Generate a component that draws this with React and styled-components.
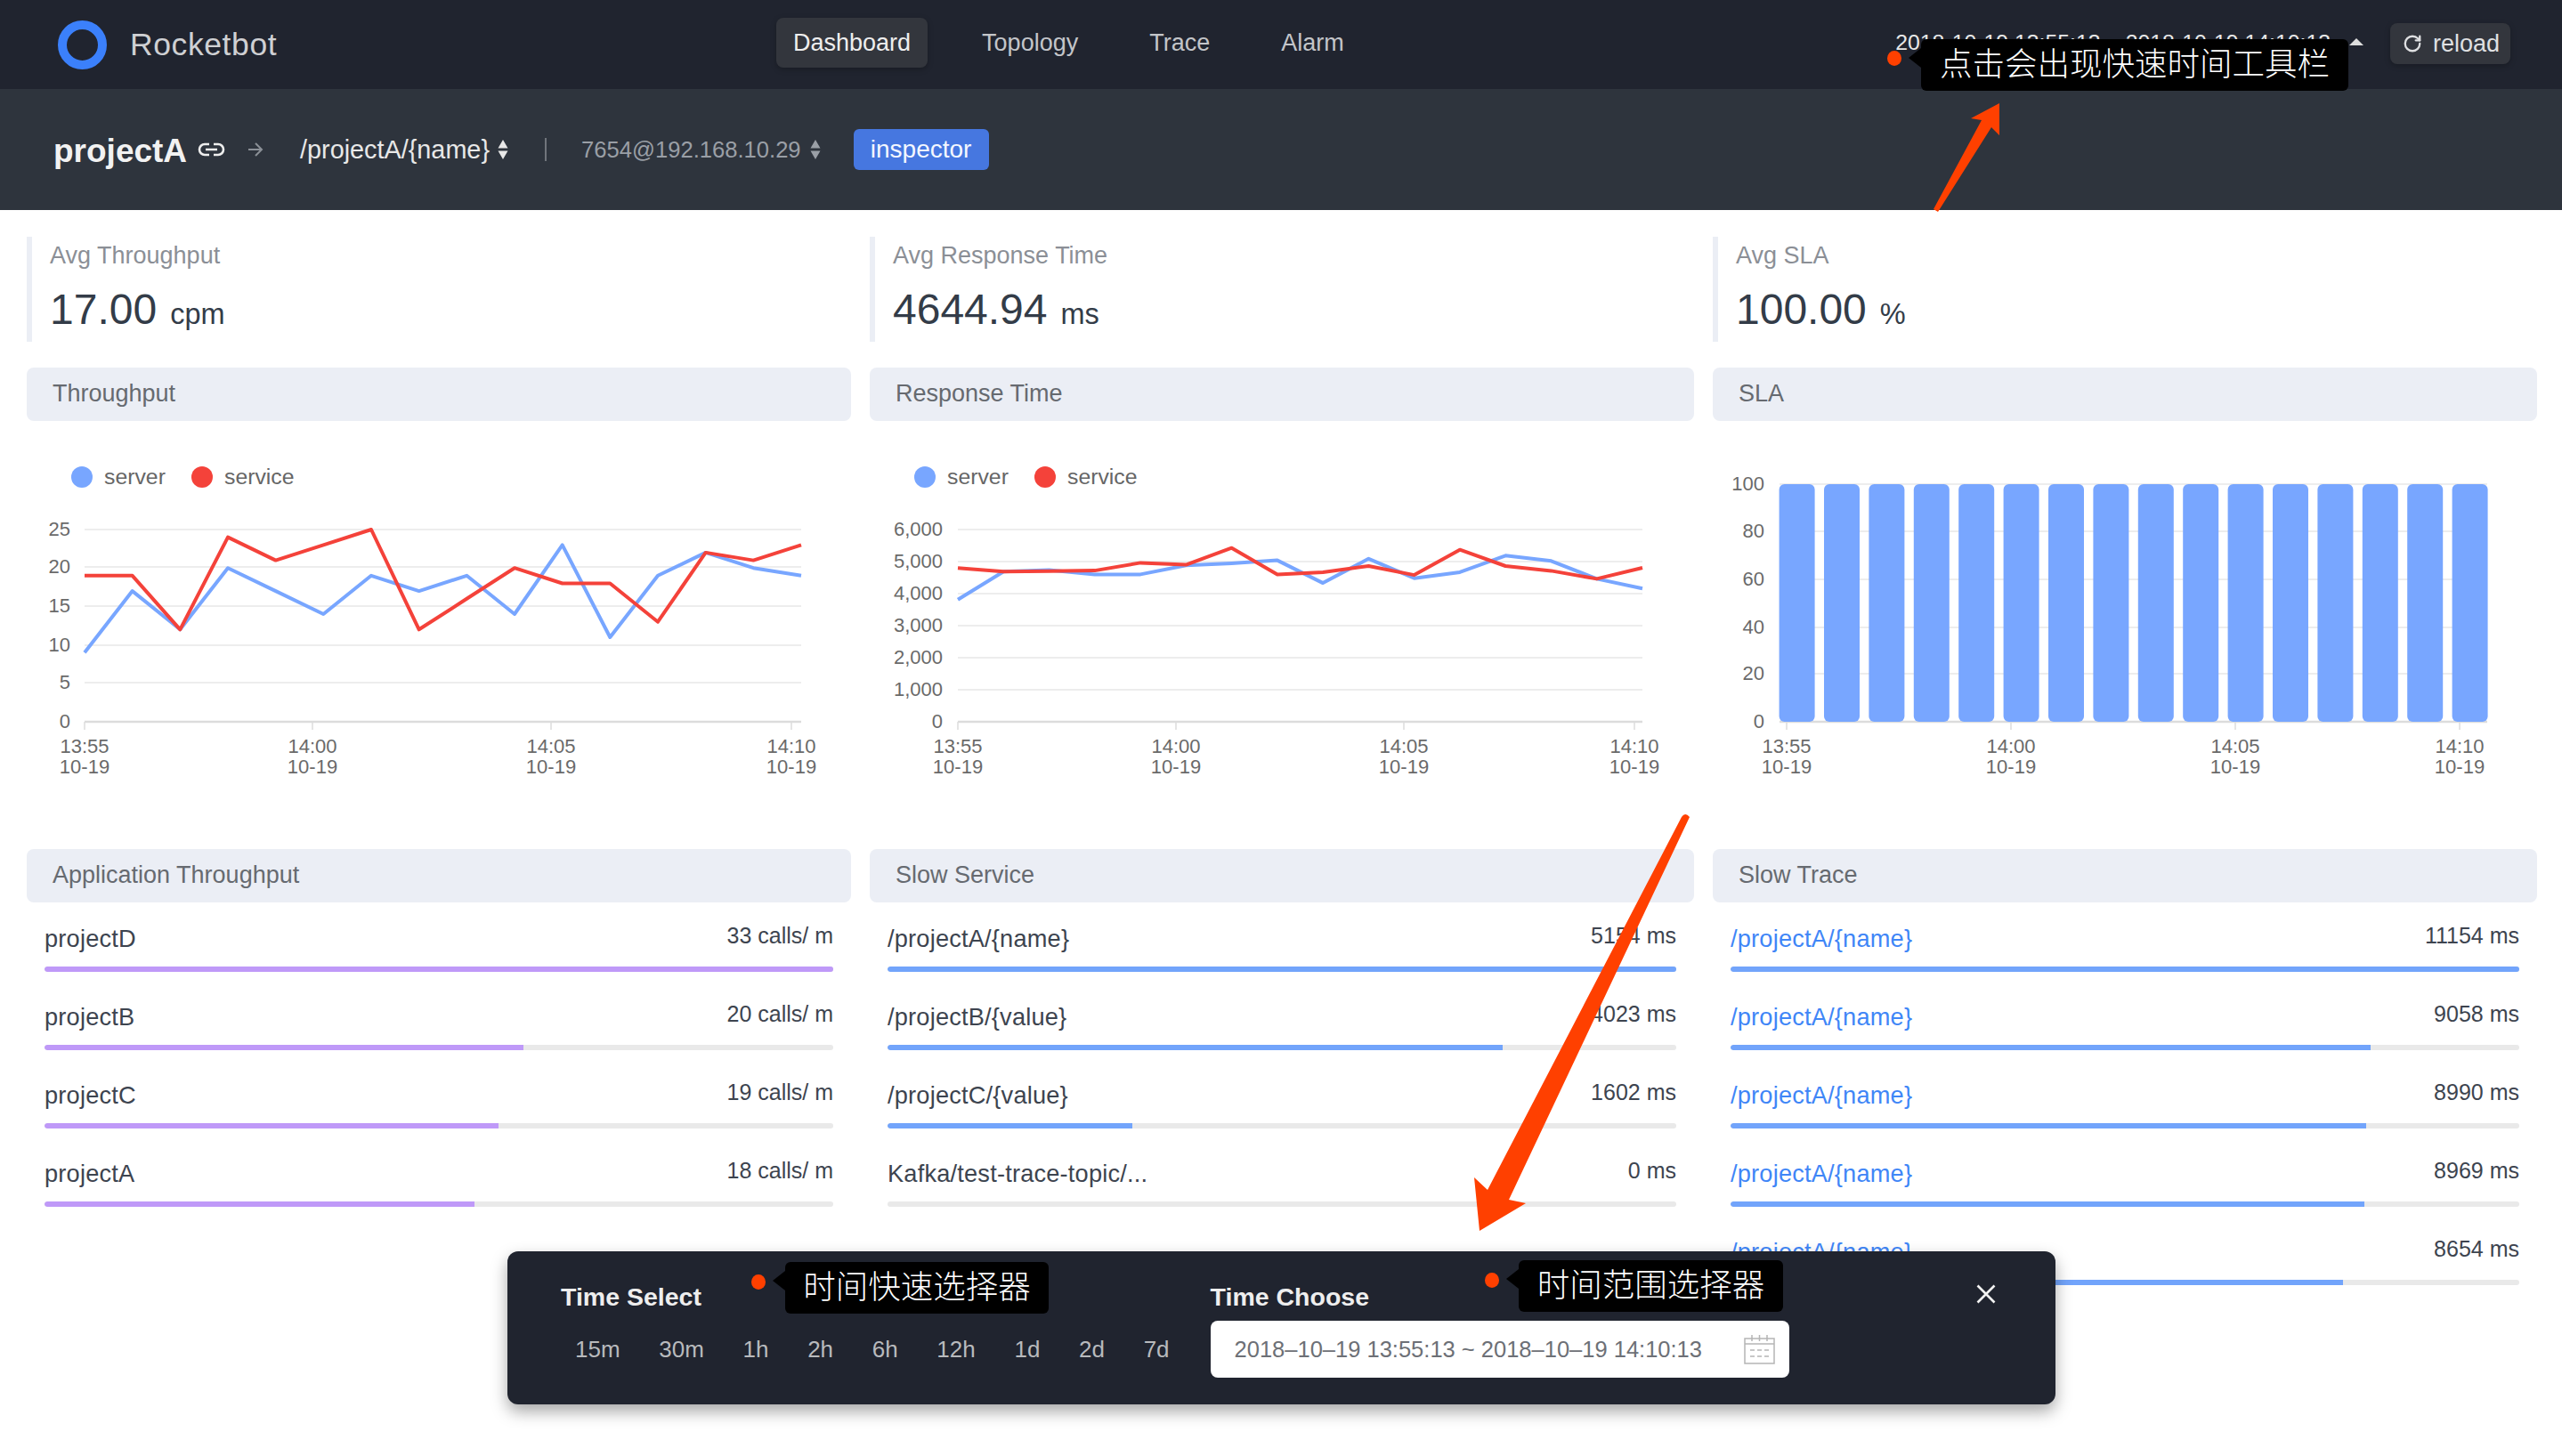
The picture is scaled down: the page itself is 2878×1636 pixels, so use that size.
import React from "react";
import styled, { createGlobalStyle } from "styled-components";
import { RotateCw } from "lucide-react";

const blue = "#78a6ff";
const red = "#f4423a";
const orange = "#ff4000";

const GlobalStyle = createGlobalStyle`
  html, body {
    margin: 0;
    padding: 0;
    background: #fff;
  }
  body {
    font-family: "Liberation Sans", "Noto Sans CJK SC", sans-serif;
  }
  * {
    box-sizing: border-box;
  }
`;

const Root = styled.div`
  position: relative;
  width: 2878px;
  height: 1636px;
  overflow: hidden;
  background: #fff;
`;

const TopBar = styled.header`
  display: flex;
  align-items: center;
  height: 100px;
  padding: 0 58px 0 65px;
  background: #20242f;
`;

const Logo = styled.div`
  display: flex;
  align-items: center;
  width: 807px;
`;

const LogoRing = styled.span`
  width: 55px;
  height: 55px;
  border: 10px solid #3b80fb;
  border-radius: 50%;
`;

const LogoText = styled.span`
  margin-left: 26px;
  font-size: 35.5px;
  letter-spacing: 0.6px;
  color: #cfd0d3;
`;

const Nav = styled.nav`
  display: flex;
  gap: 42px;
  margin-top: -4px;
`;

const NavItem = styled.div`
  height: 56px;
  padding: 0 19px;
  border-radius: 8px;
  font-size: 27px;
  line-height: 56px;
  color: ${(props) => (props.$active ? "#eeeeee" : "#c3c5c9")};
  background: ${(props) => (props.$active ? "#33363d" : "transparent")};
  box-shadow: ${(props) => (props.$active ? "0 2px 6px rgba(0,0,0,.25)" : "none")};
`;

const TimeRange = styled.div`
  display: flex;
  align-items: center;
  margin-left: auto;
  margin-top: -4px;
  font-size: 24.8px;
  color: #e8e8e8;
`;

const Caret = styled.span`
  margin-left: 21px;
  margin-top: -3px;
  border-left: 8.5px solid transparent;
  border-right: 8.5px solid transparent;
  border-bottom: 8px solid #dddddd;
`;

const ReloadButton = styled.div`
  display: flex;
  align-items: center;
  gap: 12px;
  width: 135px;
  height: 46px;
  margin-left: 30px;
  margin-top: -2px;
  padding-left: 14px;
  border-radius: 8px;
  font-size: 27px;
  color: #dfe0e2;
  background: #33363d;
  box-shadow: 0 2px 6px rgba(0, 0, 0, 0.25);
`;

const SubBar = styled.div`
  display: flex;
  align-items: center;
  height: 136px;
  padding-left: 60px;
  background: #2e343d;
`;

const ProjectName = styled.span`
  margin-top: 3px;
  font-size: 37px;
  font-weight: 700;
  color: #f2f2f2;
`;

const SubIcon = styled.svg`
  flex: none;
  margin-left: ${(props) => props.$left}px;
`;

const Crumb = styled.span`
  margin-left: ${(props) => props.$left}px;
  font-size: ${(props) => props.$size}px;
  color: ${(props) => props.$color};
`;

const Divider = styled.span`
  width: 2px;
  height: 26px;
  margin-left: 41px;
  background: #70757c;
`;

const InspectorButton = styled.div`
  width: 152px;
  height: 46px;
  margin-left: 37px;
  border-radius: 6px;
  font-size: 28px;
  line-height: 46px;
  text-align: center;
  color: #f4f7ff;
  background: #4677e0;
`;

const Main = styled.main`
  display: grid;
  grid-template-columns: repeat(3, 1fr);
  column-gap: 21px;
  padding: 30px 28px 0 30px;
`;

const Column = styled.section`
  display: flex;
  flex-direction: column;
  min-width: 0;
`;

const Stat = styled.div`
  height: 118px;
  margin-bottom: 29px;
  padding: 0 0 0 20px;
  border-left: 6px solid #ebeef5;
`;

const StatLabel = styled.div`
  padding-top: 5px;
  font-size: 27px;
  line-height: 32px;
  color: #8b8f96;
`;

const StatValue = styled.div`
  margin-top: 17px;
  font-size: 48px;
  line-height: 56px;
  color: #333c48;
`;

const StatUnit = styled.span`
  margin-left: 15px;
  font-size: 32.5px;
`;

const PanelTitle = styled.div`
  height: 60px;
  padding-left: 29px;
  border-radius: 8px;
  font-size: 27px;
  line-height: 58px;
  color: #666a70;
  background: #ebeef5;
`;

const ChartSvg = styled.svg`
  display: block;
  flex: none;
`;

const ChartText = styled.text`
  font-family: "Liberation Sans", sans-serif;
  font-size: 22px;
  fill: #6a6a6a;
`;

const LegendText = styled.text`
  font-family: "Liberation Sans", sans-serif;
  font-size: 24.8px;
  fill: #666666;
`;

const Row = styled.div`
  margin-bottom: 10px;
  padding: 0 20px;
`;

const RowHead = styled.div`
  display: flex;
  justify-content: space-between;
  height: 72px;
`;

const RowName = styled.span`
  margin-top: 23px;
  font-size: 27.2px;
  letter-spacing: 0.2px;
  line-height: 36px;
  color: ${(props) => (props.$link ? "#3f86f7" : "#3d444f")};
`;

const RowValue = styled.span`
  margin-top: 19px;
  font-size: 25px;
  line-height: 36px;
  color: #3d444f;
`;

const Track = styled.div`
  height: 6px;
  border-radius: 3px;
  overflow: hidden;
  background: #e9e9e9;
`;

const Fill = styled.div`
  height: 100%;
  border-radius: 3px 0 0 3px;
  background: ${(props) => props.$color};
`;

const TimePanel = styled.div`
  position: absolute;
  left: 570px;
  top: 1406px;
  display: flex;
  width: 1739px;
  height: 172px;
  padding: 30px 0 0 60px;
  border-radius: 12px;
  background: #20242f;
  box-shadow: 0 8px 18px rgba(0, 0, 0, 0.35);
`;

const TimeGroup = styled.div`
  display: flex;
  flex-direction: column;
  margin-left: ${(props) => props.$left || 0}px;
`;

const TimeTitle = styled.div`
  height: 42px;
  margin-bottom: 6px;
  font-size: 28.5px;
  font-weight: 700;
  line-height: 42px;
  color: #eeeeee;
`;

const QuickList = styled.div`
  display: flex;
  align-items: center;
  gap: 43.7px;
  height: 64px;
  padding-left: 16px;
`;

const QuickItem = styled.span`
  font-size: 26px;
  color: #b8babd;
`;

const DateInput = styled.div`
  display: flex;
  align-items: center;
  justify-content: space-between;
  width: 650px;
  height: 64px;
  padding: 0 16px 0 27px;
  border-radius: 8px;
  font-size: 25.5px;
  color: #6d7076;
  background: #fff;
`;

const CloseIcon = styled.svg`
  position: absolute;
  left: 1650px;
  top: 37px;
`;

const NoteDot = styled.span`
  position: absolute;
  left: ${(props) => props.$x}px;
  top: ${(props) => props.$y}px;
  width: 16px;
  height: 17px;
  border-radius: 50%;
  background: ${orange};
`;

const NoteBubble = styled.div`
  position: absolute;
  left: ${(props) => props.$x}px;
  top: ${(props) => props.$y}px;
  width: ${(props) => props.$width}px;
  height: 58px;
  border-radius: 6px;
  font-family: "Noto Sans CJK SC", "Liberation Sans", sans-serif;
  font-size: 36.5px;
  font-weight: 300;
  line-height: 52px;
  text-align: center;
  white-space: nowrap;
  color: #fff;
  background: #000;

  &::before {
    content: "";
    position: absolute;
    left: -14px;
    top: 10px;
    border-top: 11px solid transparent;
    border-bottom: 11px solid transparent;
    border-right: 14px solid #000;
  }
`;

const ArrowLayer = styled.svg`
  position: absolute;
  left: 0;
  top: 0;
  pointer-events: none;
`;

const timeLabels = ["13:55", "14:00", "14:05", "14:10"];

const throughput = {
  ticks: [65, 321, 589, 859],
  plot: [65, 870],
  labelX: 49,
  max: 25,
  yLabels: [0, 5, 10, 15, 20, 25],
  yPos: [338, 294, 252, 208, 164, 122],
  server: [9, 17, 12, 20, 17, 14, 19, 17, 19, 14, 23, 11, 19, 22, 20, 19],
  service: [19, 19, 12, 24, 21, 23, 25, 12, 16, 20, 18, 18, 13, 22, 21, 23],
};

const responseTime = {
  ticks: [99, 344, 600, 859],
  plot: [99, 868],
  labelX: 82,
  max: 6000,
  yLabels: ["0", "1,000", "2,000", "3,000", "4,000", "5,000", "6,000"],
  yPos: [338, 302, 266, 230, 194, 158, 122],
  server: [3815, 4685, 4740, 4600, 4600, 4880, 4945, 5040, 4330, 5090, 4480, 4670, 5185, 5020, 4460, 4160],
  service: [4800, 4685, 4700, 4720, 4960, 4900, 5425, 4600, 4670, 4860, 4580, 5370, 4860, 4710, 4460, 4805],
};

const CHART_TOP = 122;
const CHART_BOTTOM = 338;

function TimeAxis({ ticks, start, end }) {
  return (
    <>
      <line x1={start} x2={end} y1={CHART_BOTTOM} y2={CHART_BOTTOM} stroke="#dcdcdc" strokeWidth="2.5" />
      {ticks.map((x, i) => (
        <g key={x}>
          <line x1={x} x2={x} y1={CHART_BOTTOM} y2={CHART_BOTTOM + 9} stroke="#dcdcdc" strokeWidth="1.5" />
          <ChartText x={x} y={373} textAnchor="middle">{timeLabels[i]}</ChartText>
          <ChartText x={x} y={396} textAnchor="middle">10-19</ChartText>
        </g>
      ))}
    </>
  );
}

function LineChart({ data }) {
  const [left, right] = data.plot;
  const toPoints = (values) =>
    values
      .map((v, i) => {
        const x = left + (i * (right - left)) / (values.length - 1);
        const y = CHART_BOTTOM - (v / data.max) * (CHART_BOTTOM - CHART_TOP);
        return `${x.toFixed(1)},${y.toFixed(1)}`;
      })
      .join(" ");

  return (
    <ChartSvg width="926" height="481" viewBox="0 0 926 481">
      <circle cx="62" cy="63" r="12" fill={blue} />
      <LegendText x="87" y="71">server</LegendText>
      <circle cx="197" cy="63" r="12" fill={red} />
      <LegendText x="222" y="71">service</LegendText>
      {data.yLabels.map((label, i) => (
        <g key={label}>
          {i > 0 && (
            <line x1={left} x2={right} y1={data.yPos[i]} y2={data.yPos[i]} stroke="#ededed" strokeWidth="2" />
          )}
          <ChartText x={data.labelX} y={data.yPos[i] + 7} textAnchor="end">{label}</ChartText>
        </g>
      ))}
      <TimeAxis ticks={data.ticks} start={left} end={right} />
      <polyline points={toPoints(data.server)} fill="none" stroke={blue} strokeWidth="4" strokeLinejoin="round" />
      <polyline points={toPoints(data.service)} fill="none" stroke={red} strokeWidth="4" strokeLinejoin="round" />
    </ChartSvg>
  );
}

function BarChart() {
  const yLabels = [0, 20, 40, 60, 80, 100];
  const yPos = [338, 284, 232, 178, 124, 71];
  const bars = Array.from({ length: 16 }, (_, i) => 74.6 + i * 50.4);
  return (
    <ChartSvg width="926" height="481" viewBox="0 0 926 481">
      {yLabels.map((label, i) => (
        <g key={label}>
          {i > 0 && <line x1="75" x2="870" y1={yPos[i]} y2={yPos[i]} stroke="#ededed" strokeWidth="2" />}
          <ChartText x="58" y={yPos[i] + 7} textAnchor="end">{label}</ChartText>
        </g>
      ))}
      <TimeAxis ticks={[83, 335, 587, 839]} start={75} end={870} />
      {bars.map((x) => (
        <rect key={x} x={x} y="71" width="40" height="267" rx="6" fill={blue} />
      ))}
    </ChartSvg>
  );
}

function BarRow({ name, value, percent, color, link }) {
  return (
    <Row>
      <RowHead>
        <RowName $link={link}>{name}</RowName>
        <RowValue>{value}</RowValue>
      </RowHead>
      <Track>
        <Fill $color={color} style={{ width: `${percent}%` }} />
      </Track>
    </Row>
  );
}

function SortIcon({ color, left }) {
  return (
    <SubIcon $left={left} width="12" height="22" viewBox="0 0 12 22">
      <path d="M6 0l5.5 9.5H.5zM6 22L.5 12.5h11z" fill={color} />
    </SubIcon>
  );
}

function Note({ dotX, dotY, x, y, width, children }) {
  return (
    <>
      <NoteDot $x={dotX} $y={dotY} />
      <NoteBubble $x={x} $y={y} $width={width}>{children}</NoteBubble>
    </>
  );
}

function CalendarIcon() {
  return (
    <svg width="35" height="34" viewBox="0 0 35 34" fill="none" stroke="#b5b5b5" strokeWidth="1.5">
      <path d="M1 5h33v28H1zM1 11h33M9 1v7M17.5 1v7M26 1v7" />
      <path d="M7 18h21M7 25h21" strokeDasharray="5 3" />
    </svg>
  );
}

const appThroughput = [
  ["projectD", "33 calls/ m", 100],
  ["projectB", "20 calls/ m", 60.7],
  ["projectC", "19 calls/ m", 57.6],
  ["projectA", "18 calls/ m", 54.5],
];

const slowServices = [
  ["/projectA/{name}", "5154 ms", 100],
  ["/projectB/{value}", "4023 ms", 78],
  ["/projectC/{value}", "1602 ms", 31],
  ["Kafka/test-trace-topic/...", "0 ms", 0],
];

const slowTraces = [
  ["11154 ms", 100],
  ["9058 ms", 81.2],
  ["8990 ms", 80.6],
  ["8969 ms", 80.4],
  ["8654 ms", 77.6],
];

const quickTimes = ["15m", "30m", "1h", "2h", "6h", "12h", "1d", "2d", "7d"];

export default function App() {
  return (
    <Root>
      <GlobalStyle />
      <TopBar>
        <Logo>
          <LogoRing />
          <LogoText>Rocketbot</LogoText>
        </Logo>
        <Nav>
          <NavItem $active>Dashboard</NavItem>
          <NavItem>Topology</NavItem>
          <NavItem>Trace</NavItem>
          <NavItem>Alarm</NavItem>
        </Nav>
        <TimeRange>
          2018-10-19 13:55:13 ~ 2018-10-19 14:10:13
          <Caret />
        </TimeRange>
        <ReloadButton>
          <RotateCw size={22} strokeWidth={2.5} />
          reload
        </ReloadButton>
      </TopBar>

      <SubBar>
        <ProjectName>projectA</ProjectName>
        <SubIcon $left={12} width="31" height="16" viewBox="0 0 31 16" fill="none" stroke="#eeeeee" strokeWidth="2.6">
          <path d="M13 2H8a6 6 0 000 12h5M18 2h5a6 6 0 010 12h-5M9 8h13" />
        </SubIcon>
        <SubIcon $left={25} width="18" height="18" viewBox="0 0 18 18" fill="none" stroke="#8b9097" strokeWidth="2">
          <path d="M1 9h15M9 2l7 7-7 7" />
        </SubIcon>
        <Crumb $left={41} $size={28.8} $color="#e8e8e8">/projectA/{"{name}"}</Crumb>
        <SortIcon color="#e8e8e8" left={9} />
        <Divider />
        <Crumb $left={39} $size={25.6} $color="#9a9fa6">7654@192.168.10.29</Crumb>
        <SortIcon color="#9a9fa6" left={10} />
        <InspectorButton>inspector</InspectorButton>
      </SubBar>

      <Main>
        <Column>
          <Stat>
            <StatLabel>Avg Throughput</StatLabel>
            <StatValue>17.00<StatUnit>cpm</StatUnit></StatValue>
          </Stat>
          <PanelTitle>Throughput</PanelTitle>
          <LineChart data={throughput} />
          <PanelTitle>Application Throughput</PanelTitle>
          {appThroughput.map(([name, value, percent]) => (
            <BarRow key={name} name={name} value={value} percent={percent} color="#bf99f8" />
          ))}
        </Column>

        <Column>
          <Stat>
            <StatLabel>Avg Response Time</StatLabel>
            <StatValue>4644.94<StatUnit>ms</StatUnit></StatValue>
          </Stat>
          <PanelTitle>Response Time</PanelTitle>
          <LineChart data={responseTime} />
          <PanelTitle>Slow Service</PanelTitle>
          {slowServices.map(([name, value, percent]) => (
            <BarRow key={name} name={name} value={value} percent={percent} color="#72a4fb" />
          ))}
        </Column>

        <Column>
          <Stat>
            <StatLabel>Avg SLA</StatLabel>
            <StatValue>100.00<StatUnit>%</StatUnit></StatValue>
          </Stat>
          <PanelTitle>SLA</PanelTitle>
          <BarChart />
          <PanelTitle>Slow Trace</PanelTitle>
          {slowTraces.map(([value, percent]) => (
            <BarRow key={value} name="/projectA/{name}" value={value} percent={percent} color="#72a4fb" link />
          ))}
        </Column>
      </Main>

      <TimePanel>
        <TimeGroup>
          <TimeTitle>Time Select</TimeTitle>
          <QuickList>
            {quickTimes.map((t) => (
              <QuickItem key={t}>{t}</QuickItem>
            ))}
          </QuickList>
        </TimeGroup>
        <TimeGroup $left={46}>
          <TimeTitle>Time Choose</TimeTitle>
          <DateInput>
            2018–10–19 13:55:13 ~ 2018–10–19 14:10:13
            <CalendarIcon />
          </DateInput>
        </TimeGroup>
        <CloseIcon width="22" height="22" viewBox="0 0 22 22" stroke="#f2f2f2" strokeWidth="2.6">
          <path d="M1.5 1.5l19 19M20.5 1.5l-19 19" />
        </CloseIcon>
      </TimePanel>

      <ArrowLayer width="2878" height="1636" viewBox="0 0 2878 1636">
        <path
          d="M2172 235L2226 135L2214 133L2246 116L2246 152L2237 143L2177 238Z"
          fill={orange}
        />
        <path
          d="M1889 918Q1893 912 1898 918L1695 1348L1714 1352L1662 1383L1656 1323L1671 1337Z"
          fill={orange}
        />
      </ArrowLayer>

      <Note dotX={2120} dotY={57} x={2158} y={44} width={480}>点击会出现快速时间工具栏</Note>
      <Note dotX={844} dotY={1432} x={882} y={1418} width={296}>时间快速选择器</Note>
      <Note dotX={1668} dotY={1430} x={1706} y={1416} width={297}>时间范围选择器</Note>
    </Root>
  );
}
